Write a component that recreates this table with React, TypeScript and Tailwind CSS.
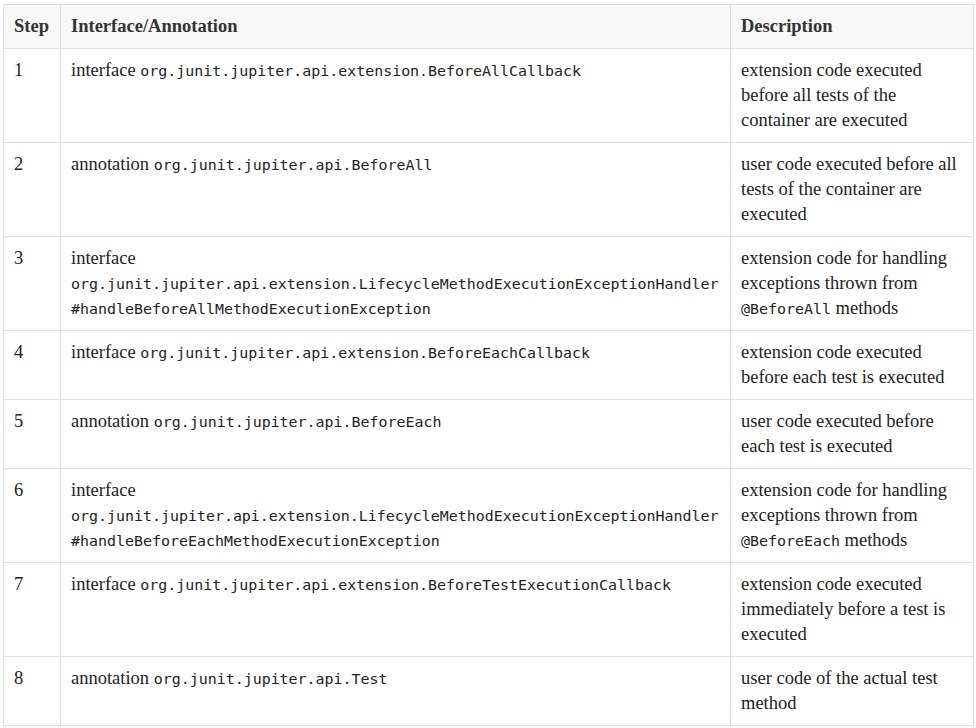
import React from "react";

const serif = "font-['Liberation_Serif',serif]";
const mono = "font-['DejaVu_Sans_Mono',monospace] text-[14.95px] leading-[25px]";

type Row = { step: string; kind: string; code: string[]; desc: React.ReactNode[] };

const C = ({ children }: { children: React.ReactNode }) => <code className={mono}>{children}</code>;

const rows: Row[] = [
  { step: "1", kind: "interface", code: ["org.junit.jupiter.api.extension.BeforeAllCallback"], desc: ["extension code executed", "before all tests of the", "container are executed"] },
  { step: "2", kind: "annotation", code: ["org.junit.jupiter.api.BeforeAll"], desc: ["user code executed before all", "tests of the container are", "executed"] },
  { step: "3", kind: "interface", code: ["org.junit.jupiter.api.extension.LifecycleMethodExecutionExceptionHandler", "#handleBeforeAllMethodExecutionException"], desc: ["extension code for handling", "exceptions thrown from", <><C>@BeforeAll</C> methods</>] },
  { step: "4", kind: "interface", code: ["org.junit.jupiter.api.extension.BeforeEachCallback"], desc: ["extension code executed", "before each test is executed"] },
  { step: "5", kind: "annotation", code: ["org.junit.jupiter.api.BeforeEach"], desc: ["user code executed before", "each test is executed"] },
  { step: "6", kind: "interface", code: ["org.junit.jupiter.api.extension.LifecycleMethodExecutionExceptionHandler", "#handleBeforeEachMethodExecutionException"], desc: ["extension code for handling", "exceptions thrown from", <><C>@BeforeEach</C> methods</>] },
  { step: "7", kind: "interface", code: ["org.junit.jupiter.api.extension.BeforeTestExecutionCallback"], desc: ["extension code executed", "immediately before a test is", "executed"] },
  { step: "8", kind: "annotation", code: ["org.junit.jupiter.api.Test"], desc: ["user code of the actual test", "method"] },
];

const cell = "border border-[#dedede] px-[10px] py-[9px] align-top";

export default function App() {
  return (
    <div className={`min-h-[728px] bg-white pt-[4px] pl-[3px] ${serif} text-[18.5px] leading-[25px] text-[#222]`}>
      <table className="table-fixed border-collapse w-[970px]">
        <colgroup>
          <col className="w-[57px]" />
          <col className="w-[670px]" />
          <col className="w-[243px]" />
        </colgroup>
        <thead>
          <tr className="bg-[#f7f8f7]">
            {["Step", "Interface/Annotation", "Description"].map((h) => (
              <th key={h} className={`${cell} text-left font-bold text-[#333]`}>
                {h}
              </th>
            ))}
          </tr>
        </thead>
        <tbody>
          {rows.map((r) => {
            const multi = r.code.length > 1;
            return (
              <tr key={r.step}>
                <td className={cell}>{r.step}</td>
                <td className={`${cell} whitespace-nowrap`}>
                  {multi ? (
                    <>
                      <div className="h-[25px]">{r.kind}</div>
                      {r.code.map((c) => (
                        <div key={c} className="h-[25px]">
                          <C>{c}</C>
                        </div>
                      ))}
                    </>
                  ) : (
                    <div className="h-[25px]">
                      {r.kind} <C>{r.code[0]}</C>
                    </div>
                  )}
                </td>
                <td className={`${cell} whitespace-nowrap`}>
                  {r.desc.map((d, i) => (
                    <div key={i} className="h-[25px]">{d}</div>
                  ))}
                </td>
              </tr>
            );
          })}
        </tbody>
      </table>
    </div>
  );
}
